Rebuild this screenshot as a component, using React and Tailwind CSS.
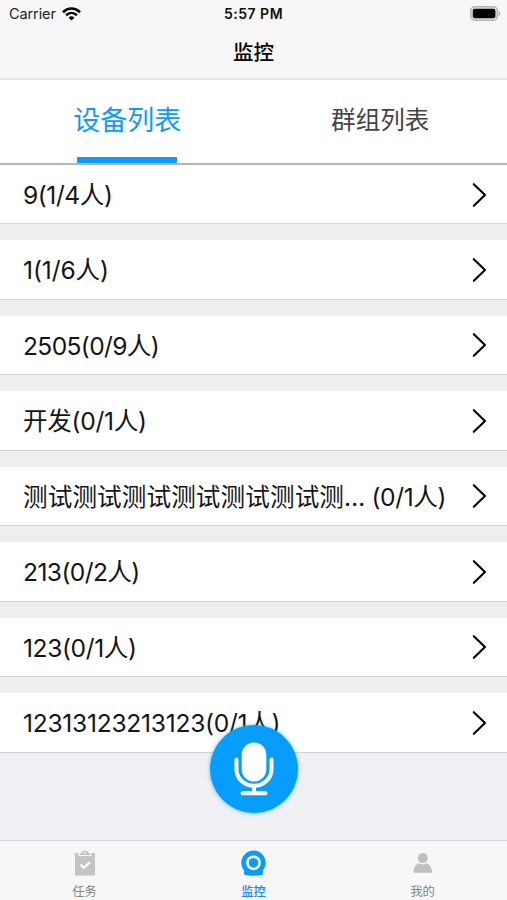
const rows = [
  { name: '9', count: '(1/4人)', spacing: 'tracking-[-0.45px]' },
  { name: '1', count: '(1/6人)', spacing: 'tracking-[-0.1px]' },
  { name: '2505', count: '(0/9人)', spacing: 'tracking-[-0.65px]' },
  { name: '开发', count: '(0/1人)', spacing: 'tracking-[-0.3px]' },
  { name: '测试测试测试测试测试测试测…', count: '(0/1人)', spacing: 'tracking-[0.1px]', countSpacing: 'ml-auto mr-[1px] tracking-[-0.4px]' },
  { name: '213', count: '(0/2人)', spacing: 'tracking-[-0.6px]' },
  { name: '123', count: '(0/1人)', spacing: 'tracking-[-0.4px]' },
  { name: '12313123213123', count: '(0/1人)', spacing: 'tracking-[-0.28px]' },
];

function StatusBar() {
  return (
    <div className="grid h-[27px] grid-cols-3 items-center pl-[9px] pr-[6px] text-[14px] leading-[27px]">
      <div className="flex items-center gap-[6px] text-[#222]">
        <span className="text-[14.5px] tracking-[-0.1px]">Carrier</span>
        <svg width="19" height="14" viewBox="0 0 19 14" fill="none" stroke="#000" strokeWidth="2.6">
          <path d="M1 5.2C6 .3 13 .3 18 5.2" />
          <path d="M4.1 8.3c3.2-3.1 7.6-3.1 10.8 0" />
          <path d="M6.6 10.7a4.2 4.2 0 0 1 5.8 0l-2.9 2.9z" fill="#000" stroke="none" />
        </svg>
      </div>
      <span className="-ml-[3px] whitespace-nowrap text-center font-semibold tracking-[0.5px] text-[#111]">5:57 PM</span>
      <svg className="justify-self-end" width="31" height="15" viewBox="0 0 31 15">
        <rect x=".8" y=".8" width="26.6" height="13.4" rx="4" fill="#e4e4e4" stroke="#b4b4b4" strokeWidth="1.4" />
        <rect x="2.8" y="2.8" width="22.6" height="9.4" rx="2" fill="#000" />
        <path d="M28.6 5v5c2.4-.8 2.4-4.2 0-5z" fill="#b4b4b4" />
      </svg>
    </div>
  );
}

function Row({ name, count, spacing, countSpacing = '', first }) {
  return (
    <div className={`flex items-center border-b border-[#d3d3d3] bg-white pl-[23px] pr-[20px] pt-[1px] ${first ? 'h-[59px]' : 'mt-[16px] h-[59.54px]'}`}>
      <div className={`flex w-[424px] whitespace-nowrap pt-[1px] text-[24.6px] leading-[36px] text-[#151515] ${spacing}`}>
        <span>{name}</span>
        <span className={countSpacing}>{count}</span>
      </div>
      <svg className="ml-auto" width="15" height="26" viewBox="0 0 15 26" fill="none" stroke="#000" strokeWidth="2.1" strokeLinecap="round" strokeLinejoin="round">
        <path d="M1.8 2.2 13 13 1.8 23.8" />
      </svg>
    </div>
  );
}

function TaskIcon() {
  return (
    <svg width="20" height="26" viewBox="0 0 20 26">
      <path d="M0 3h3.5v3h13V3H20v22.5H0z" fill="#c4c4c4" />
      <path d="M4.5 5C5 3 6 2.5 7 2.4 7.4-.1 12.6-.1 13 2.4c1 .1 2 .6 2.5 2.6z" fill="#c4c4c4" />
      <circle cx="10" cy="2.7" r="1" fill="#f7f7f7" />
      <path d="m5.6 14.7 3.2 3 6-5.5" fill="none" stroke="#fff" strokeWidth="2.2" />
    </svg>
  );
}

function CameraIcon() {
  return (
    <svg width="25" height="26" viewBox="0 0 25 26">
      <circle cx="12.5" cy="12.8" r="12.2" fill="#0a9cf5" />
      <path d="M3 17h19v7.4q-9.5 2.6-19 0z" fill="#0a9cf5" />
      <circle cx="12.5" cy="12.8" r="6.1" fill="none" stroke="#fff" strokeWidth="2.5" />
    </svg>
  );
}

function UserIcon() {
  return (
    <svg width="20" height="26" viewBox="0 0 20 26">
      <circle cx="9.8" cy="8.1" r="5" fill="#c0c0c0" />
      <path d="M.5 22.8c0-5 2.2-8.2 5.5-9.5 2.3 1.6 5.2 1.6 7.5 0 3.3 1.3 5.6 4.5 5.6 9.5z" fill="#c0c0c0" />
    </svg>
  );
}

function NavItem({ icon, label, active }) {
  return (
    <div className={`flex flex-col items-center pt-[9px] text-[12.3px] leading-[18px] ${active ? 'font-medium text-[#2287ee]' : 'text-[#858585]'}`}>
      {icon}
      <span className="mt-[7px]">{label}</span>
    </div>
  );
}

export default function App() {
  return (
    <div className="relative flex h-[900px] w-[507px] flex-col overflow-hidden bg-[#efeff4] font-[Inter,'Noto_Sans_CJK_SC',sans-serif]">
      <header className="h-[80px] shrink-0 border-b-2 border-[#e6e6e6] bg-[#f7f7f7]">
        <StatusBar />
        <h1 className="text-center text-[20.5px] font-medium leading-[52px] text-black">监控</h1>
      </header>
      <div className="grid h-[85px] shrink-0 grid-cols-2 border-b-2 border-[#b5b5b5] bg-white text-center">
        <div className="flex flex-col items-center pl-[1px] text-[27px] text-[#1299f5]">
          <span className="h-[77px] leading-[81px]">设备列表</span>
          <span className="h-[6px] w-[100px] shrink-0 bg-[#0b9df8]" />
        </div>
        <span className="text-[24.6px] leading-[80px] text-[#444]">群组列表</span>
      </div>
      <main className="flex-1">
        <div className="bg-[#eeeeee]">
          {rows.map((row, i) => (
            <Row key={row.name} {...row} first={i === 0} />
          ))}
        </div>
      </main>
      <nav className="grid h-[60px] shrink-0 grid-cols-3 border-t border-[#d9d9dd] bg-[#f7f7f7]">
        <NavItem icon={<TaskIcon />} label="任务" />
        <NavItem icon={<CameraIcon />} label="监控" active />
        <NavItem icon={<UserIcon />} label="我的" />
      </nav>
      <button className="absolute left-[210px] top-[725px] flex size-[88px] items-center justify-center rounded-full bg-[#069dfc] shadow-[0_0_4px_#069dfc99]">
        <svg width="40" height="54" viewBox="0 0 40 54" fill="none" stroke="#fff" strokeWidth="4" strokeLinecap="round">
          <rect x="7.7" y=".5" width="24.6" height="39" rx="12.3" fill="#fff" stroke="none" />
          <path d="M2.5 17.5v10a17.5 16.2 0 0 0 35 0v-10" />
          <path d="M20 44v7M8.5 51.2h23" />
        </svg>
      </button>
    </div>
  );
}
